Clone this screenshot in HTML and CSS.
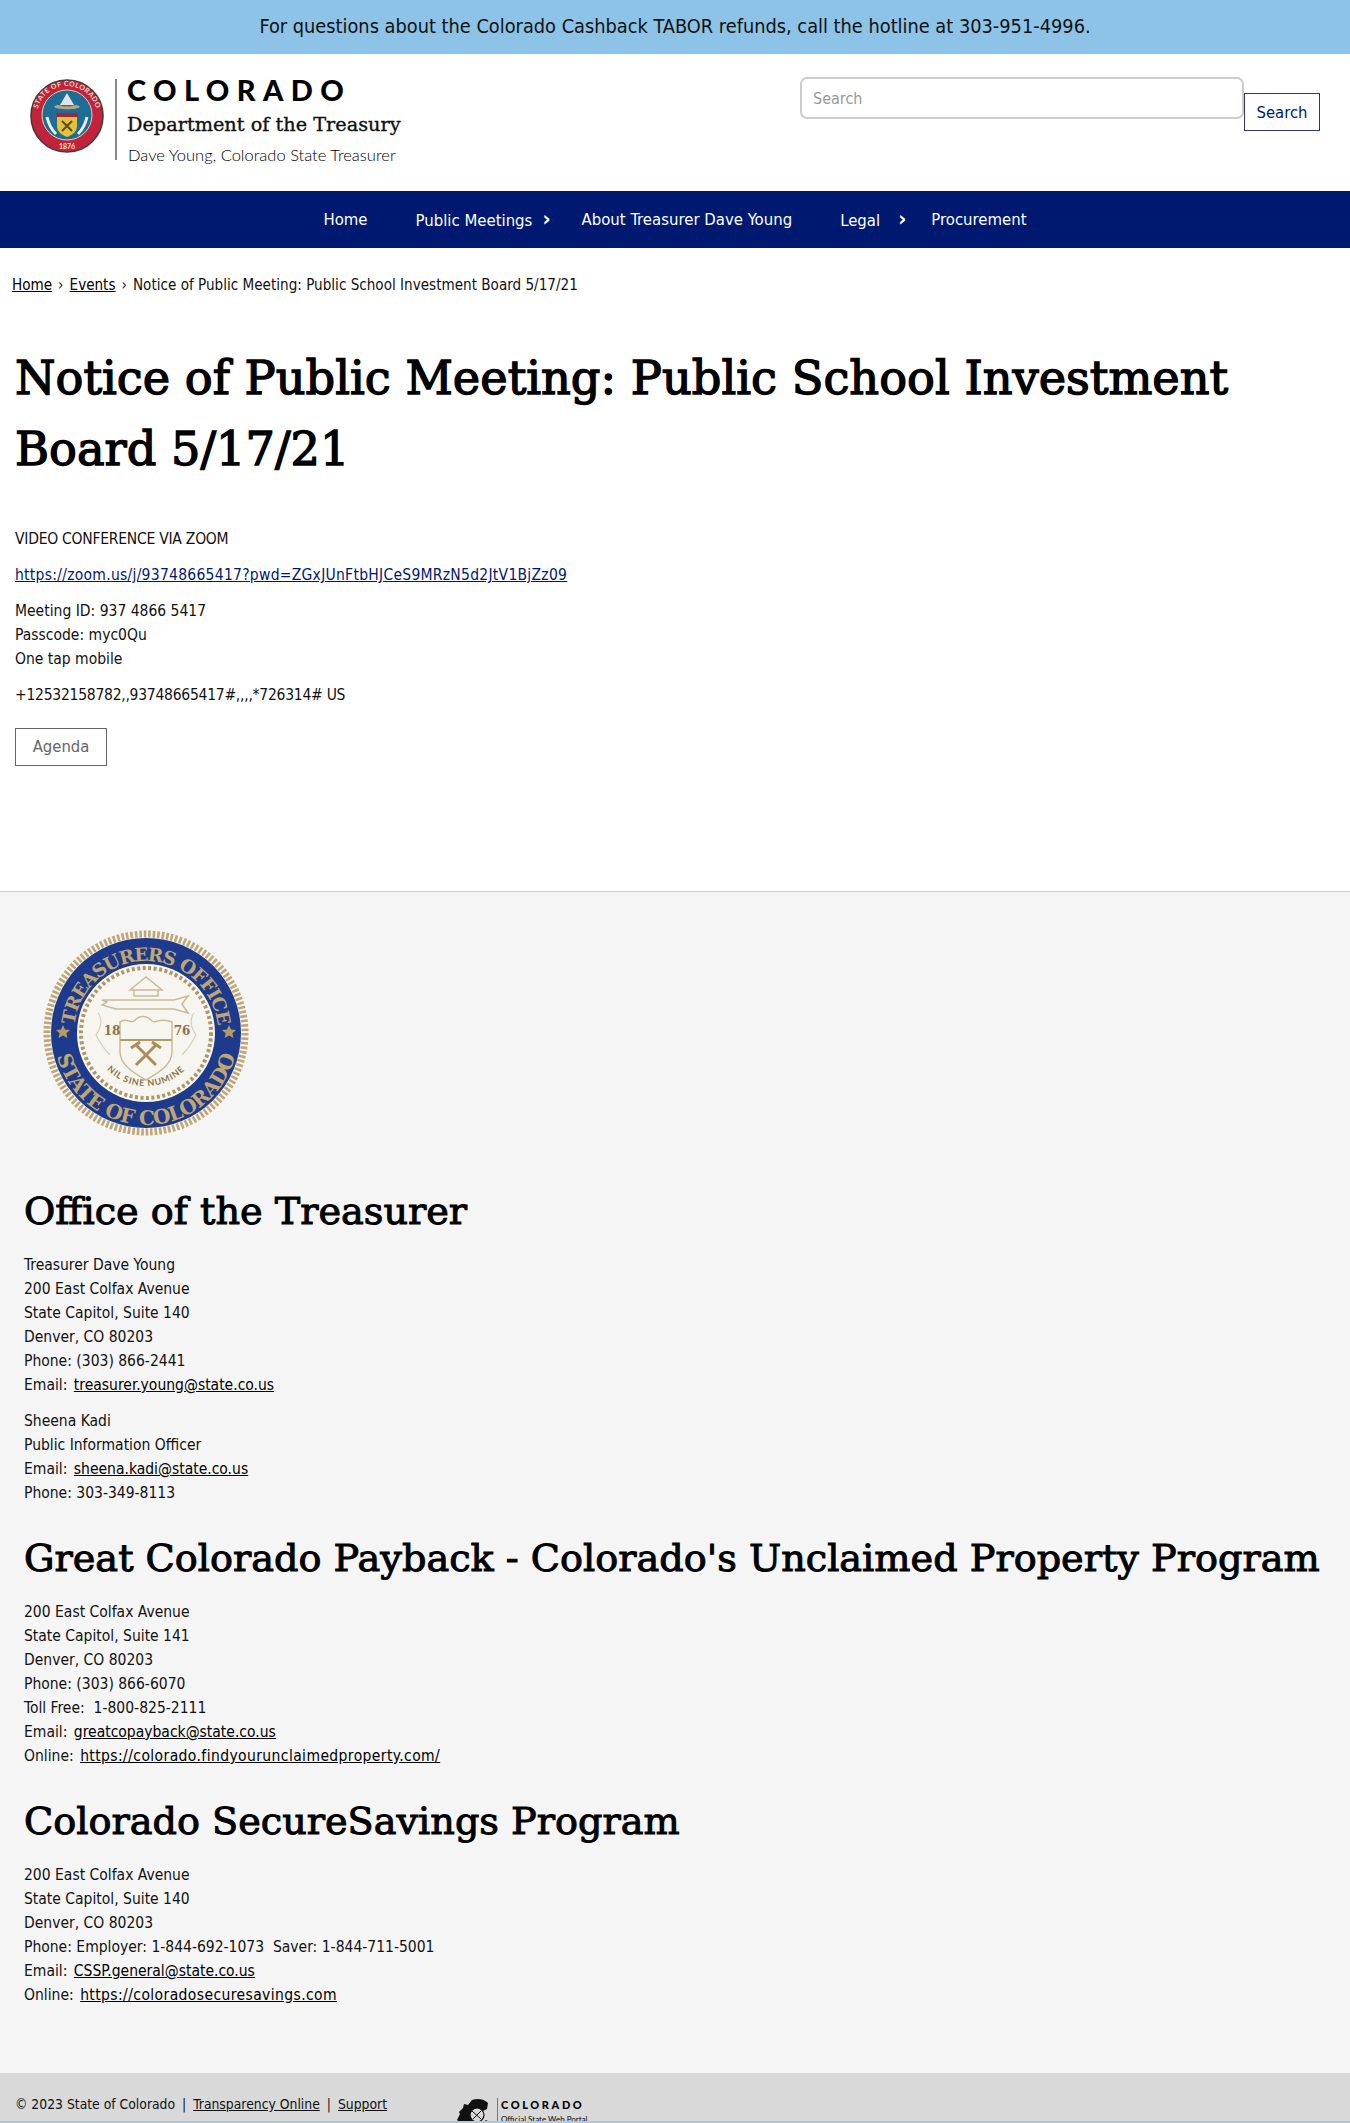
FILE: index.html
```html
<!DOCTYPE html>
<html lang="en">
<head>
<meta charset="utf-8">
<title>Notice of Public Meeting: Public School Investment Board 5/17/21</title>
<link rel="stylesheet" href="styles.css">
</head>
<body>
<div class="banner">For questions about the Colorado Cashback TABOR refunds, call the hotline at 303-951-4996.</div>
<header class="site-header">
  <div class="logo">
    <svg class="state-seal" width="74" height="74" viewBox="0 0 74 74" aria-hidden="true">
      <defs><path id="stateArc" d="M7 37a30 30 0 0 1 60 0"/></defs>
      <circle cx="37" cy="37" r="36" fill="#c2233b" stroke="#47363a" stroke-width="1.6"/>
      <text class="seal-state"><textPath href="#stateArc" startOffset="50%" text-anchor="middle">STATE OF COLORADO</textPath></text>
      <circle cx="37" cy="36" r="25" fill="#1e6d96" stroke="#e0d8a8" stroke-width="1"/>
      <path d="M37 14l7 12H30z" fill="#dfe4e6"/>
      <path d="M24 28c4-5 9 1 13-1 4 2 9-4 13 1-3 3-23 3-26 0z" fill="#b9a47c"/>
      <path d="M26 34h22v4H26z" fill="#a3253a"/>
      <path d="M27 38h20v9c0 6-5 9-10 11-5-2-10-5-10-11z" fill="#e3c23a"/>
      <path d="M32 42l10 10M42 42L32 52" stroke="#5d4a20" stroke-width="2"/>
      <path d="M17 38c2 9 6 14 9 17M57 38c-2 9-6 14-9 17" stroke="#e9eef0" stroke-width="3" fill="none"/>
      <text x="37" y="70" class="seal-year" text-anchor="middle">1876</text>
    </svg>
    <div class="logo-text">
      <div class="logo-state">COLORADO</div>
      <div class="logo-dept">Department of the Treasury</div>
      <div class="logo-name">Dave Young, Colorado State Treasurer</div>
    </div>
  </div>
  <form class="search">
    <input class="search-input" type="text" placeholder="Search">
    <button class="search-btn" type="button">Search</button>
  </form>
</header>
<nav class="main-nav">
  <a href="#" class="nav-item">Home</a>
  <a href="#" class="nav-item has-sub">Public Meetings<span class="chev">›</span></a>
  <a href="#" class="nav-item">About Treasurer Dave Young</a>
  <a href="#" class="nav-item has-sub has-sub-wide">Legal<span class="chev">›</span></a>
  <a href="#" class="nav-item">Procurement</a>
</nav>
<div class="crumbs"><a href="#">Home</a><span class="sep">›</span><a href="#">Events</a><span class="sep">›</span>Notice of Public Meeting: Public School Investment Board 5/17/21</div>
<main class="content">
  <h1>Notice of Public Meeting: Public School Investment Board 5/17/21</h1>
  <p class="tight">VIDEO CONFERENCE VIA ZOOM</p>
  <p><a class="blue" href="#">https://zoom.us/j/93748665417?pwd=ZGxJUnFtbHJCeS9MRzN5d2JtV1BjZz09</a></p>
  <p>Meeting ID: 937 4866 5417<br>Passcode: myc0Qu<br>One tap mobile</p>
  <p class="tight">+12532158782,,93748665417#,,,,*726314# US</p>
  <a class="agenda" href="#">Agenda</a>
</main>
<footer class="site-footer">
  <svg class="office-seal" width="212" height="212" viewBox="0 0 212 212" aria-hidden="true">
    <defs>
      <path id="arcTop" d="M34 106a72 72 0 0 1 144 0"/>
      <path id="arcBottom" d="M14 106a92 92 0 0 0 184 0"/>
      <path id="arcMotto" d="M58 130a54 54 0 0 0 96 0"/>
    </defs>
    <circle cx="106" cy="106" r="99" fill="none" stroke="#bfa672" stroke-width="7" stroke-dasharray="2.6 1.9"/>
    <circle cx="106" cy="106" r="95" fill="#1d3a8c"/>
    <circle cx="106" cy="106" r="69" fill="#f7f5ef"/>
    <circle cx="106" cy="106" r="65" fill="none" stroke="#ad9668" stroke-width="4" stroke-dasharray="3 2.5"/>
    <text class="seal-ring"><textPath href="#arcTop" startOffset="50%" text-anchor="middle">TREASURERS OFFICE</textPath></text>
    <text class="seal-ring seal-ring-low"><textPath href="#arcBottom" startOffset="50%" text-anchor="middle">STATE OF COLORADO</textPath></text>
    <path d="M23 98l2 4.5 5 .5-3.6 3.3 1 4.8-4.4-2.5-4.4 2.5 1-4.8L16 103l5-.5zM189 98l2 4.5 5 .5-3.6 3.3 1 4.8-4.4-2.5-4.4 2.5 1-4.8L182 103l5-.5z" fill="#b79a62"/>
    <path d="M90 63l16-13 16 13zM94 63h24v6H94z" fill="none" stroke="#c9bb98" stroke-width="1.5"/>
    <path d="M62 73h72l14-4-6 8 6 9-14-4H76l-14-4 5-3z" fill="none" stroke="#c9bb98" stroke-width="1.5"/>
    <path d="M58 86c6 8 2 16-2 22 4 8 8 14 14 20M154 86c-6 8-2 16 2 22-4 8-8 14-14 20" fill="none" stroke="#d8cfb6" stroke-width="1.2"/>
    <path d="M80 95c6-5 10 2 14-1 5-6 13-6 18 0 4 3 8-4 20 1v30c0 12-12 20-26 28-14-8-26-16-26-28z" fill="none" stroke="#c9bb98" stroke-width="1.5"/>
    <path d="M80 113h52" stroke="#b79a62" stroke-width="2"/>
    <path d="M96 118l20 20M116 118l-20 20M91 121l9-6M121 121l-9-6" stroke="#a98c58" stroke-width="3"/>
    <text x="72" y="108" class="seal-date" text-anchor="middle">18</text>
    <text x="142" y="108" class="seal-date" text-anchor="middle">76</text>
    <text class="seal-motto"><textPath href="#arcMotto" startOffset="50%" text-anchor="middle">NIL SINE NUMINE</textPath></text>
  </svg>
  <section class="office">
    <h2>Office of the Treasurer</h2>
    <p>Treasurer Dave Young<br>200 East Colfax Avenue<br>State Capitol, Suite 140<br>Denver, CO 80203<br>Phone: (303) 866-2441<br>Email: <a href="#">treasurer.young@state.co.us</a></p>
    <p>Sheena Kadi<br>Public Information Officer<br>Email: <a href="#">sheena.kadi@state.co.us</a><br>Phone: 303-349-8113</p>
    <h2>Great Colorado Payback - Colorado's Unclaimed Property Program</h2>
    <p>200 East Colfax Avenue<br>State Capitol, Suite 141<br>Denver, CO 80203<br>Phone: (303) 866-6070<br>Toll Free:&nbsp; 1-800-825-2111<br>Email: <a href="#">greatcopayback@state.co.us</a><br>Online: <a class="url" href="#">https://colorado.findyourunclaimedproperty.com/</a></p>
    <h2>Colorado SecureSavings Program</h2>
    <p>200 East Colfax Avenue<br>State Capitol, Suite 140<br>Denver, CO 80203<br>Phone: Employer: 1-844-692-1073&nbsp; Saver: 1-844-711-5001<br>Email: <a href="#">CSSP.general@state.co.us</a><br>Online: <a class="url" href="#">https://coloradosecuresavings.com</a></p>
  </section>
  <div class="legal-bar">
    <div class="legal-links">© 2023 State of Colorado<span class="pipe">|</span><a href="#">Transparency Online</a><span class="pipe">|</span><a href="#">Support</a></div>
    <div class="portal">
      <svg width="34" height="30" viewBox="0 0 34 30" aria-hidden="true"><path d="M0 30l2-7-1-1 3-6-1-2 4-4 1-4 4 1 4-5c6-2 12-1 16 3l-1 6-4 2c-4-3-9-2-11 2-2 5 1 10 6 10 3 0 6-1 8-3l3 2v6z" fill="#111"/><circle cx="21" cy="17" r="7" fill="#d9d9d9" stroke="#111" stroke-width="1.2"/><path d="M16 13l9 8M17 21l8-8" stroke="#111" stroke-width="1"/></svg>
      <div class="portal-text"><div class="portal-state">COLORADO</div><div class="portal-sub">Official State Web Portal</div></div>
    </div>
  </div>
</footer>
</body>
</html>
```
FILE: styles.css
```css
* { box-sizing: border-box; }
html, body { margin: 0; padding: 0; }
body {
  font-family: "DejaVu Sans Condensed", "DejaVu Sans", sans-serif;
  font-stretch: condensed;
  font-size: 15.5px;
  line-height: 24px;
  color: #111;
  background: #fff;
  height: 2123px;
  overflow: hidden;
}
.banner {
  height: 54px;
  background: #8cc3e6;
  text-align: center;
  font-size: 19.8px;
  line-height: 54px;
}
.site-header {
  height: 137px;
  display: flex;
  justify-content: space-between;
  padding: 23px 30px 0 30px;
}
.logo { display: flex; align-items: flex-start; }
.state-seal { margin-top: 2px; }
.logo-text {
  margin-left: 11px;
  padding-left: 10px;
  border-left: 2px solid #888;
  height: 81px;
  margin-top: 2px;
}
.logo-state {
  font-family: "Lato", sans-serif;
  font-stretch: normal;
  font-weight: 900;
  font-size: 29px;
  line-height: 24px;
  letter-spacing: 7.4px;
  color: #000;
  margin-top: -1px;
}
.logo-dept {
  font-family: "DejaVu Serif", serif;
  font-stretch: normal;
  font-size: 19.3px;
  line-height: 24px;
  margin-top: 11px;
  -webkit-text-stroke: 0.35px #111;
}
.logo-name {
  font-family: "Lato", sans-serif;
  font-stretch: normal;
  font-weight: 300;
  font-size: 16.5px;
  line-height: 20px;
  margin: 8px 0 0 1px;
  color: #000;
}
.search { display: flex; align-items: flex-start; }
.search-input {
  width: 444px;
  height: 42px;
  border: 2px solid #ccc;
  border-radius: 7px;
  padding: 0 11px;
  font-family: inherit;
  font-stretch: condensed;
  font-size: 16px;
  color: #333;
}
.search-input::placeholder { color: #999; }
.search-btn {
  width: 76px;
  height: 38px;
  margin-top: 16px;
  border: 1px solid #33336f;
  background: #fff;
  color: #001970;
  font-family: inherit;
  font-stretch: condensed;
  font-size: 16.5px;
  padding: 0;
}
.main-nav {
  height: 57px;
  background: #001970;
  display: flex;
  justify-content: center;
  align-items: center;
  gap: 48px;
}
.nav-item { color: #fff; text-decoration: none; font-size: 16.6px; }
.nav-item .chev { margin-left: 10px; font-size: 22px; font-weight: 700; }
.has-sub { margin-right: -17px; }
.has-sub-wide .chev { margin-left: 18px; }
.has-sub-wide { margin-right: -23px; }
.crumbs { padding: 25px 12px 0; height: 95px; font-size: 15.1px; }
.crumbs a { color: #000; }
.crumbs .sep { margin: 0 6px; }
.content { padding: 0 15px; height: 548px; }
h1, h2 {
  font-family: "DejaVu Serif", serif;
  font-stretch: normal;
  font-weight: 400;
  color: #000;
  margin: 0;
}
h1 { font-size: 46.3px; line-height: 71px; margin-bottom: 42px; -webkit-text-stroke: 1.4px #000; }
p { margin: 0 0 12px; }
.tight { letter-spacing: -0.25px; }
a.blue { color: #001970; letter-spacing: 0.27px; }
.agenda {
  display: inline-block;
  width: 92px;
  height: 38px;
  margin-top: 9px;
  border: 1px solid #666;
  color: #666;
  text-align: center;
  line-height: 36px;
  font-size: 16.5px;
  text-decoration: none;
}
.site-footer {
  background: #f5f5f5;
  border-top: 1px solid #ccc;
  height: 1232px;
  display: flex;
  flex-direction: column;
  align-items: flex-start;
}
.office-seal { margin: 35px 0 0 40px; flex: none; }
.office { padding: 0 24px; margin-top: 48px; flex: 1; }
.office h2 { font-size: 38.2px; line-height: 48px; margin-bottom: 18px; -webkit-text-stroke: 1px #000; }
.office p + h2 { margin-top: 29px; }
.office a { color: #000; margin-left: 2px; }
.office a.url { letter-spacing: 0.4px; }
.legal-bar {
  width: 100%;
  height: 50px;
  background: #d9d9d9;
  border-bottom: 2px solid #a9cbe4;
  display: flex;
  padding: 19px 15px 0;
  overflow: hidden;
  font-size: 13.8px;
  flex: none;
}
.legal-bar a { color: #111; }
.pipe { margin: 0 7px; }
.legal-links { width: 441px; flex: none; }
.portal { display: flex; align-items: flex-start; margin-top: 6px; gap: 7px; }
.portal-text { border-left: 1px solid #777; padding-left: 3px; }
.portal-state { font-family: "Lato", sans-serif; font-stretch: normal; font-weight: 900; font-size: 11px; line-height: 14px; letter-spacing: 2.6px; color: #000; }
.portal-sub { font-family: "Lato", sans-serif; font-stretch: normal; font-size: 8px; line-height: 14px; color: #000; }
.seal-ring { font-family: "DejaVu Serif", serif; font-stretch: normal; font-weight: 700; font-size: 18.5px; letter-spacing: -1.3px; fill: #bfa672; }
.seal-ring-low { font-size: 20px; letter-spacing: -0.5px; }
.seal-date { font-family: "DejaVu Serif", serif; font-stretch: normal; font-weight: 700; font-size: 12px; fill: #8a734a; }
.seal-motto { font-family: "Lato", sans-serif; font-stretch: normal; font-weight: 700; font-size: 9px; letter-spacing: 0.8px; fill: #8a734a; }
.seal-year { font-family: "Lato", sans-serif; font-stretch: normal; font-weight: 700; font-size: 7px; fill: #f5e6c0; }
.seal-state { font-family: "Lato", sans-serif; font-stretch: normal; font-weight: 700; font-size: 7px; letter-spacing: 0.4px; fill: #f0d8c8; }
```
